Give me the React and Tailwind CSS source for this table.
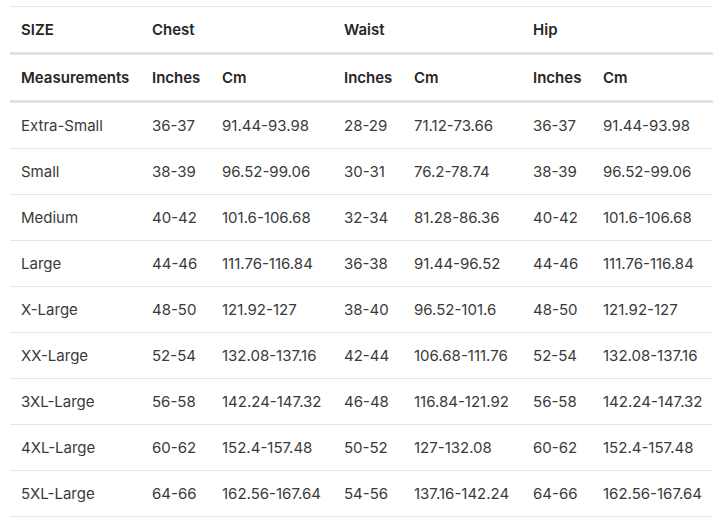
import React from 'react';

const rows = [
  ['Extra-Small', '36-37', '91.44-93.98', '28-29', '71.12-73.66', '36-37', '91.44-93.98'],
  ['Small', '38-39', '96.52-99.06', '30-31', '76.2-78.74', '38-39', '96.52-99.06'],
  ['Medium', '40-42', '101.6-106.68', '32-34', '81.28-86.36', '40-42', '101.6-106.68'],
  ['Large', '44-46', '111.76-116.84', '36-38', '91.44-96.52', '44-46', '111.76-116.84'],
  ['X-Large', '48-50', '121.92-127', '38-40', '96.52-101.6', '48-50', '121.92-127'],
  ['XX-Large', '52-54', '132.08-137.16', '42-44', '106.68-111.76', '52-54', '132.08-137.16'],
  ['3XL-Large', '56-58', '142.24-147.32', '46-48', '116.84-121.92', '56-58', '142.24-147.32'],
  ['4XL-Large', '60-62', '152.4-157.48', '50-52', '127-132.08', '60-62', '152.4-157.48'],
  ['5XL-Large', '64-66', '162.56-167.64', '54-56', '137.16-142.24', '64-66', '162.56-167.64'],
];

const widths = [131, 70, 122, 70, 119, 70, 121];

// Size chart table
export default function App() {
  const th = 'pl-[11px] pr-1 py-[12px] text-left font-semibold text-[#262626]';
  return (
    <div className="bg-white px-[10px] pt-[6px] text-[15px] leading-[21px]" style={{ fontFamily: 'Inter, "Liberation Sans", sans-serif' }}>
      <table className="w-[703px] table-fixed border-collapse border-t border-[#e6e6e6]">
        <colgroup>
          {widths.map((w, i) => (
            <col key={i} style={{ width: w }} />
          ))}
        </colgroup>
        <thead>
          <tr className="border-b-[3px] border-[#e2e2e2]">
            <th className={th}>SIZE</th>
            <th className={th} colSpan={2}>Chest</th>
            <th className={th} colSpan={2}>Waist</th>
            <th className={th} colSpan={2}>Hip</th>
          </tr>
          <tr className="border-b-[3px] border-[#e2e2e2]">
            <th className={th}>Measurements</th>
            <th className={th}>Inches</th>
            <th className={th}>Cm</th>
            <th className={th}>Inches</th>
            <th className={th}>Cm</th>
            <th className={th}>Inches</th>
            <th className={th}>Cm</th>
          </tr>
        </thead>
        <tbody>
          {rows.map((r, i) => (
            <tr key={i} className="border-b border-[#e6e6e6]">
              {r.map((c, j) => (
                <td key={j} className="pl-[11px] pr-1 py-[12px] text-[#3a3a3a] whitespace-nowrap">
                  {c}
                </td>
              ))}
            </tr>
          ))}
        </tbody>
      </table>
    </div>
  );
}
